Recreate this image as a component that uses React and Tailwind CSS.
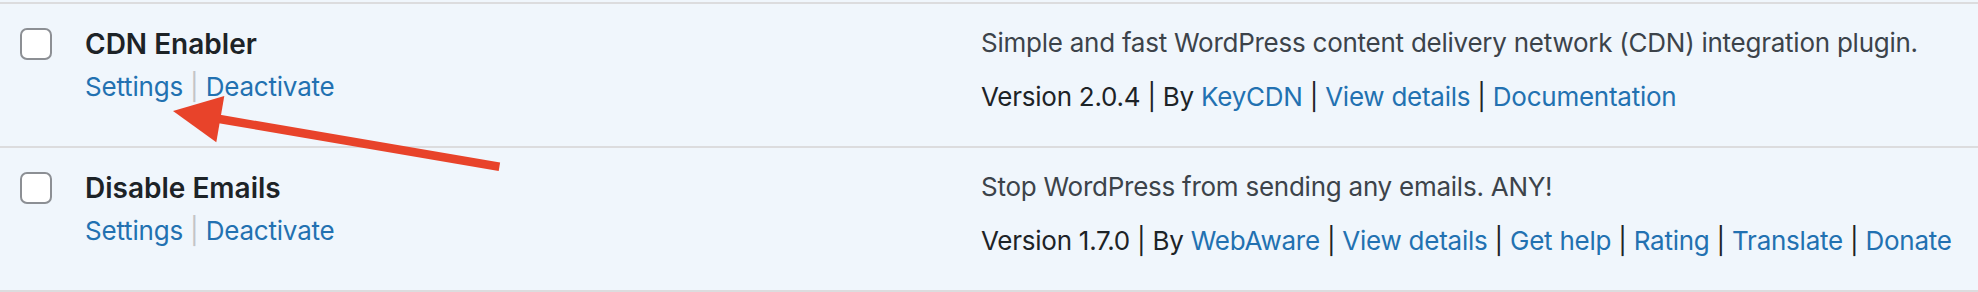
import React from "react";

const Sep = ({ light }) => (
  <span className={light ? "text-[#c3c4c7]" : "text-[#1d2327]"}> | </span>
);

function Row({ name, desc, version, author, links, last }) {
  return (
    <div
      className={
        "flex h-[144px] border-t-2 border-[#dcdcde] " +
        (last ? "h-[146px] border-b-2" : "")
      }
    >
      <div className="w-[85px] shrink-0 pl-[20px] pt-[24px]">
        <div className="w-8 h-8 rounded-[7px] border-2 border-[#8c8f94] bg-white" />
      </div>
      <div className="w-[896px] shrink-0 pt-[22px]">
        <div className="text-[28px] leading-[36px] font-semibold text-[#1d2327]">
          {name}
        </div>
        <div className="mt-[7px] text-[26px] leading-[36px] tracking-[-0.2px] text-[#2271b1]">
          <span>Settings</span>
          <Sep light />
          <span>Deactivate</span>
        </div>
      </div>
      <div className="flex-1 pt-[21px] tracking-[-0.25px]">
        <div className="text-[26px] leading-[36px] text-[#3c434a]">{desc}</div>
        <div className="mt-[18px] text-[26px] leading-[36px] text-[#1d2327] whitespace-nowrap">
          <span>Version {version}</span>
          <Sep />
          <span>By </span>
          <span className="text-[#2271b1]">{author}</span>
          {links.map((l) => (
            <React.Fragment key={l}>
              <Sep />
              <span className="text-[#2271b1]">{l}</span>
            </React.Fragment>
          ))}
        </div>
      </div>
    </div>
  );
}

export default function App() {
  return (
    <div
      className="relative w-[1978px] h-[292px] bg-[#f0f6fc] pt-[2px] overflow-hidden"
      style={{ fontFamily: "Inter, 'Noto Sans', 'Liberation Sans', sans-serif" }}
    >
      <Row
        name="CDN Enabler"
        desc="Simple and fast WordPress content delivery network (CDN) integration plugin."
        version="2.0.4"
        author="KeyCDN"
        links={["View details", "Documentation"]}
      />
      <Row
        name="Disable Emails"
        desc="Stop WordPress from sending any emails. ANY!"
        version="1.7.0"
        author="WebAware"
        links={["View details", "Get help", "Rating", "Translate", "Donate"]}
        last
      />
      <svg
        className="absolute inset-0 pointer-events-none"
        width="1978"
        height="292"
        viewBox="0 0 1978 292"
      >
        <line
          x1="499.4"
          y1="166.8"
          x2="218"
          y2="118.7"
          stroke="#e8432a"
          strokeWidth="8.5"
        />
        <polygon points="173,111 224.3,95.9 216.3,142.3" fill="#e8432a" />
      </svg>
    </div>
  );
}
